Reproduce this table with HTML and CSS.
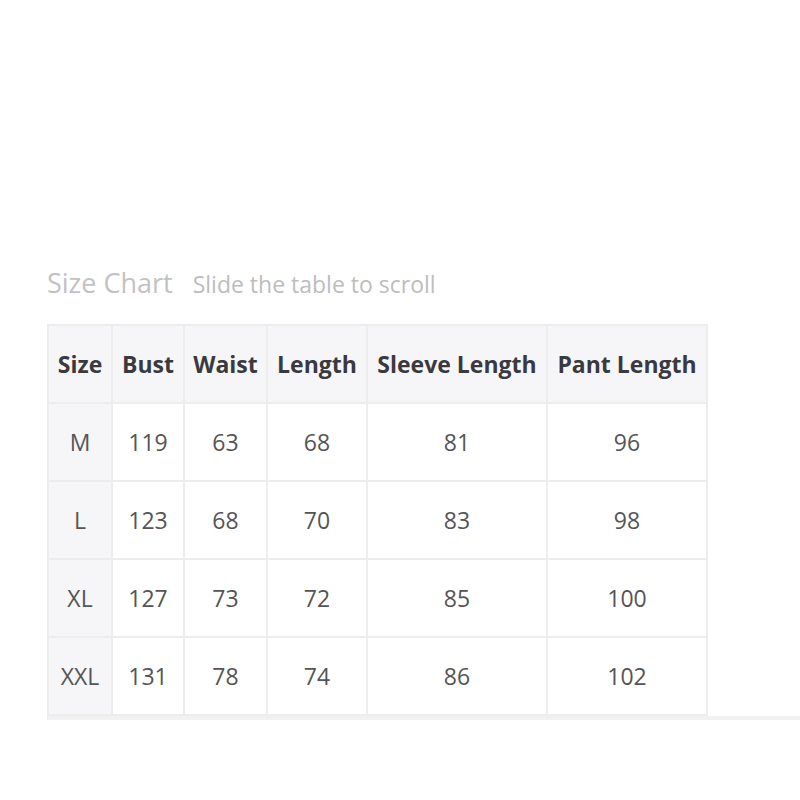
FILE: index.html
```html
<!DOCTYPE html>
<html>
<head>
<meta charset="utf-8">
<link rel="stylesheet" href="styles.css">
</head>
<body>
<div class="chart">
  <div class="heading">
    <span class="title">Size Chart</span>
    <span class="hint">Slide the table to scroll</span>
  </div>
  <div class="scroller">
    <table class="sizes">
      <colgroup>
        <col class="c-size"><col class="c-bust"><col class="c-waist"><col class="c-length"><col class="c-sleeve"><col class="c-pant">
      </colgroup>
      <thead>
        <tr><th>Size</th><th>Bust</th><th>Waist</th><th>Length</th><th>Sleeve Length</th><th>Pant Length</th></tr>
      </thead>
      <tbody>
        <tr><td class="sz">M</td><td>119</td><td>63</td><td>68</td><td>81</td><td>96</td></tr>
        <tr><td class="sz">L</td><td>123</td><td>68</td><td>70</td><td>83</td><td>98</td></tr>
        <tr><td class="sz">XL</td><td>127</td><td>73</td><td>72</td><td>85</td><td>100</td></tr>
        <tr><td class="sz">XXL</td><td>131</td><td>78</td><td>74</td><td>86</td><td>102</td></tr>
      </tbody>
    </table>
  </div>
</div>
</body>
</html>
```
FILE: styles.css
```css
html, body {
  margin: 0;
  padding: 0;
  background: #fff;
}
body {
  font-family: "Open Sans", "Liberation Sans", sans-serif;
}
.chart {
  padding-top: 264px;
  padding-left: 47px;
}
.heading {
  display: flex;
  align-items: baseline;
  gap: 20px;
  height: 60px;
}
.title {
  font-size: 27px;
  color: #c2c2c2;
}
.hint {
  font-size: 23px;
  color: #bdbdbd;
}
.scroller {
  border-bottom: 4px solid #f1f1f1;
}
.sizes {
  border-collapse: collapse;
  table-layout: fixed;
  width: 659px;
}
.c-size { width: 64px; }
.c-bust { width: 72px; }
.c-waist { width: 83px; }
.c-length { width: 100px; }
.c-sleeve { width: 180px; }
.c-pant { width: 160px; }
.sizes th, .sizes td {
  border: 2px solid #ededed;
  height: 76px;
  padding: 0;
  text-align: center;
  white-space: nowrap;
}
.sizes th {
  background: #f6f6f8;
  font-size: 23px;
  font-weight: 700;
  color: #3a3a3e;
}
.sizes td {
  font-size: 23px;
  color: #555;
}
.sizes td.sz {
  background: #f6f6f8;
}
```
